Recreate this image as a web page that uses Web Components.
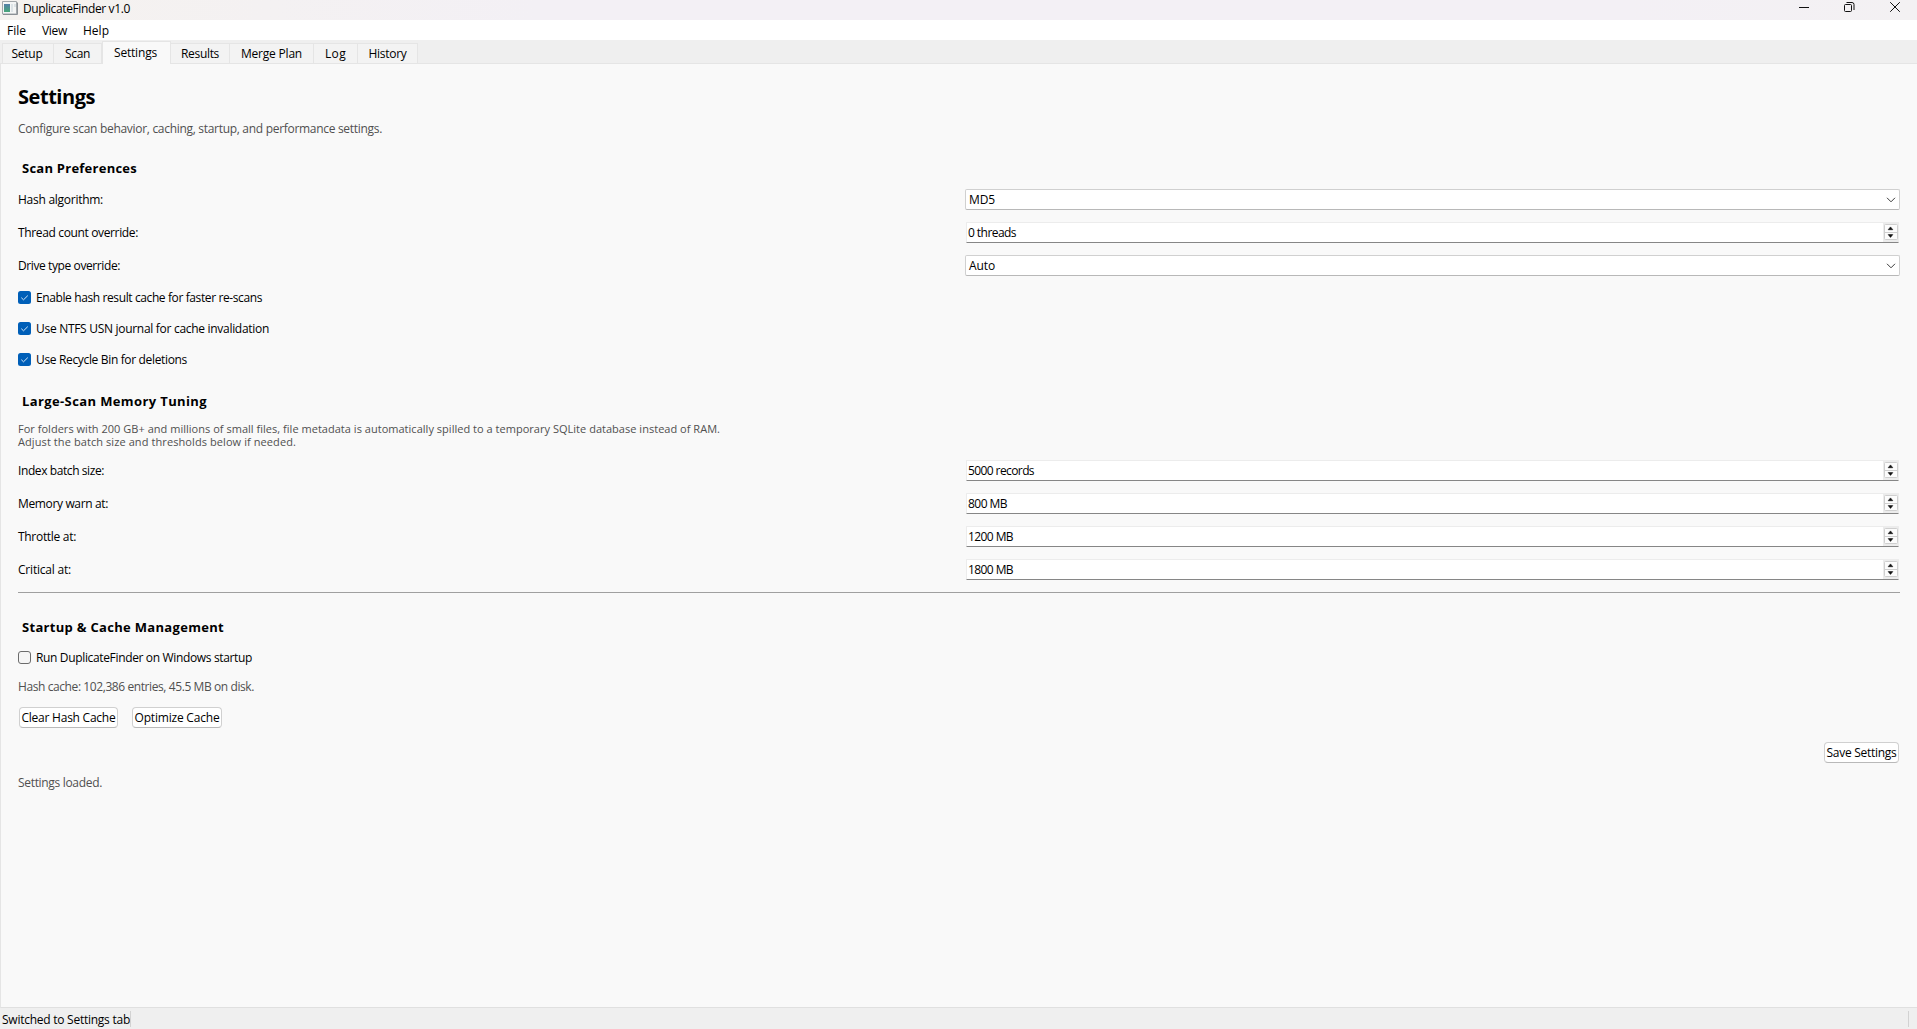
<!DOCTYPE html>
<html lang="en">
<head>
<meta charset="utf-8">
<title>DuplicateFinder v1.0</title>
<style>
html,body{margin:0;height:100%;overflow:hidden}
body{font:12px/18px "Open Sans","Noto Sans",sans-serif;color:#000;background:#f9f9f9}
</style>
</head>
<body>
<app-window></app-window>
<script>
const define = (name, html, setup) => {
  const t = document.createElement('template');
  t.innerHTML = html;
  customElements.define(name, class extends HTMLElement {
    constructor() {
      super();
      this.attachShadow({mode: 'open'}).append(t.content.cloneNode(true));
    }
    connectedCallback() { if (setup) setup.call(this); }
  });
};

define('app-window', `<style>
:host{display:flex;flex-direction:column;height:100vh;width:100%}
settings-page{flex:1}
</style>
<title-bar></title-bar><menu-bar></menu-bar><tab-strip></tab-strip><settings-page></settings-page><status-bar></status-bar>`);

define('title-bar', `<style>
:host{display:flex;height:20px;background:linear-gradient(90deg,#f5f2ef,#f3f0f5 28%,#f3f0f5 85%,#f3f1f3);flex:none;box-sizing:border-box;padding-left:2px}
fit-text{margin:0 0 0 5px}
.icon{margin-top:1px}
.sp{flex:1}
.ctl{margin-right:17px;width:120px;height:20px}
</style>
<svg class="icon" width="16" height="14" viewBox="0 0 16 14"><defs><linearGradient id="g" x2="0" y2="1"><stop stop-color="#5580a8"/><stop offset="1" stop-color="#48a778"/></linearGradient></defs><path d="M.5 .5h14v12.500h-14z" fill="#f4f5f5" stroke="#a3a7aa"/><path d="M1 13.500h14.500v-12" fill="none" stroke="#8b9095"/><path d="M2 3h6v8H2z" fill="url(#g)"/><path d="M9 3h2v8H9zM12 3h2v3h-2z" fill="#dde3e6"/></svg>
<fit-text w="107">DuplicateFinder v1.0</fit-text><span class="sp"></span>
<svg class="ctl" viewBox="0 0 120 20" fill="none" stroke="#111"><path d="M19 7.500h10"/><rect x="64.500" y="4.500" width="7" height="7" rx="1"/><path d="M66.500 2.500h5.500a2 2 0 0 1 2 2v5.500" /><path d="M110.200 2.200l9.600 9.600M119.800 2.200l-9.600 9.600"/></svg>`);

define('menu-bar', `<style>
:host{display:flex;height:20px;background:#fff;flex:none;gap:16px;padding:2px 0 0 7px;box-sizing:border-box}
</style><fit-text w="19">File</fit-text><fit-text w="25">View</fit-text><fit-text w="26">Help</fit-text>`);

define('tab-strip', `<style>
:host{display:flex;height:24px;background:#efefef;flex:none;padding-left:2px;box-sizing:border-box;align-items:flex-end;box-shadow:inset 0 -1px #e5e5e5}
</style>
<tab-item style="width:52px;padding-right:2px"><fit-text w="31">Setup</fit-text></tab-item><tab-item style="width:48px"><fit-text w="25">Scan</fit-text></tab-item><tab-item active style="width:69px;padding-right:2px"><fit-text w="43">Settings</fit-text></tab-item><tab-item style="width:59px"><fit-text w="38">Results</fit-text></tab-item><tab-item style="width:84px"><fit-text w="61">Merge Plan</fit-text></tab-item><tab-item style="width:44px"><fit-text w="21">Log</fit-text></tab-item><tab-item style="width:60px"><fit-text w="38">History</fit-text></tab-item>`);

define('tab-item', `<style>
:host{display:flex;box-sizing:border-box;height:21px;border:1px solid #e5e5e5;border-left-width:0;background:#f3f3f3;justify-content:center;padding-top:1px}
:host(:first-of-type){border-left-width:1px}
:host([active]){height:23px;border-bottom:0;border-left-width:1px;background:#f9f9f9;padding-top:2px}
</style><slot></slot>`);

define('section-title', `<style>
:host{display:block;font-weight:700;font-size:13px;height:18px;line-height:18px;padding-left:4px}
</style><slot></slot>`);

define('form-row', `<style>
:host{display:grid;grid-template-columns:947px 1fr;height:21px;margin-bottom:12px}
.l{padding-top:2px}
</style><div class="l"><slot name="label"></slot></div><slot></slot>`);

define('combo-box', `<style>
:host{display:flex;box-sizing:border-box;height:21px;border:1px solid #d0d0d0;border-bottom-color:#b8b8b8;border-radius:2px;background:#fff;padding:1px 3px 0 3px;justify-content:space-between}
svg{margin-top:6px}
</style><slot></slot><svg width="10" height="6" viewBox="0 0 10 6"><path d="M1 .8l4 4 4-4" fill="none" stroke="#3c3c3c"/></svg>`);

define('spin-box', `<style>
:host{display:flex;box-sizing:border-box;height:21px;margin:0 1px 0 0;border:1px solid #ececec;border-bottom:1px solid #868686;border-radius:1px;background:#fff;padding-left:1px;margin-left:1px;justify-content:space-between}
slot{display:block;padding-top:1px}
.b{background:#ececec;padding:1px 0 0 1px;width:14px}
svg{display:block}
</style><slot></slot><div class="b"><svg width="14" height="16" viewBox="0 0 14 16"><rect x=".5" y=".5" width="13" height="15" rx="1" fill="#fcfcfc" stroke="#cfcfcf"/><path d="M1 8.500h12" stroke="#cfcfcf"/><path d="M6.500 2.900l2.300 2.800H4.200zM6.500 13.400l2.300-2.800H4.200z" fill="#111" stroke="#111" stroke-width=".6"/></svg></div>`);

define('check-box', `<style>
:host{display:flex;height:16px;gap:5px}
svg{margin-top:2px;flex:none}
.on{display:none}
:host([checked]) .on{display:block}
:host([checked]) .off{display:none}
</style>
<svg class="on" width="13" height="13" viewBox="0 0 13 13"><rect width="13" height="13" rx="2.500" fill="#005fb8"/><path d="M3.300 6.700l2.200 2.100 4.300-4.200" fill="none" stroke="#d8e9f8"/></svg>
<svg class="off" width="13" height="13" viewBox="0 0 13 13"><rect x=".5" y=".5" width="12" height="12" rx="2.500" fill="#f6f6f6" stroke="#6c6c6c"/></svg>
<slot></slot>`);

define('push-button', `<style>
:host{display:flex;box-sizing:border-box;height:21px;border:1px solid #d0d0d0;border-bottom-color:#b9b9b9;border-radius:4px;background:#fff;padding-top:1px;justify-content:center}
</style><slot></slot>`);

define('settings-page', `<style>
:host{display:flex;flex-direction:column;box-sizing:border-box;border-left:1px solid #e5e5e5;border-bottom:1px solid #e0e0e0;background:#f9f9f9;padding:18px 17px 0}
h1{margin:0;font-size:20px;line-height:30px;height:28px}
.muted{color:#505050;height:16px}
.small{font-size:11px;line-height:13px;color:#505050}
.small div{height:13px}
hr{border:0;height:1px;background:#a0a0a0;margin:0;width:100%}
.btns{display:flex;gap:14px;padding-left:1px}
.save{align-self:flex-end;width:75px;margin-right:1px}
</style>
<h1><fit-text w="77">Settings</fit-text></h1>
<div class="muted" style="margin-top:10px"><fit-text w="364">Configure scan behavior, caching, startup, and performance settings.</fit-text></div>
<section-title style="margin-top:23px"><fit-text w="115">Scan Preferences</fit-text></section-title>
<div style="margin-top:12px">
<form-row><fit-text slot="label" w="85">Hash algorithm:</fit-text><combo-box><fit-text w="26">MD5</fit-text></combo-box></form-row>
<form-row><fit-text slot="label" w="120">Thread count override:</fit-text><spin-box><fit-text w="48">0 threads</fit-text></spin-box></form-row>
<form-row><fit-text slot="label" w="102">Drive type override:</fit-text><combo-box><fit-text w="26">Auto</fit-text></combo-box></form-row>
</div>
<check-box checked style="margin-top:1px"><fit-text w="226">Enable hash result cache for faster re-scans</fit-text></check-box>
<check-box checked style="margin-top:15px"><fit-text w="233">Use NTFS USN journal for cache invalidation</fit-text></check-box>
<check-box checked style="margin-top:15px"><fit-text w="151">Use Recycle Bin for deletions</fit-text></check-box>
<section-title style="margin-top:25px"><fit-text w="185">Large-Scan Memory Tuning</fit-text></section-title>
<div class="small" style="margin-top:12px"><div><fit-text w="702">For folders with 200 GB+ and millions of small files, file metadata is automatically spilled to a temporary SQLite database instead of RAM.</fit-text></div><div><fit-text w="278">Adjust the batch size and thresholds below if needed.</fit-text></div></div>
<div style="margin-top:12px">
<form-row><fit-text slot="label" w="86">Index batch size:</fit-text><spin-box><fit-text w="66">5000 records</fit-text></spin-box></form-row>
<form-row><fit-text slot="label" w="90">Memory warn at:</fit-text><spin-box><fit-text w="39">800 MB</fit-text></spin-box></form-row>
<form-row><fit-text slot="label" w="58">Throttle at:</fit-text><spin-box><fit-text w="45">1200 MB</fit-text></spin-box></form-row>
<form-row><fit-text slot="label" w="53">Critical at:</fit-text><spin-box><fit-text w="45">1800 MB</fit-text></spin-box></form-row>
</div>
<hr>
<section-title style="margin-top:25px"><fit-text w="202">Startup &amp; Cache Management</fit-text></section-title>
<check-box style="margin-top:13px"><fit-text w="216">Run DuplicateFinder on Windows startup</fit-text></check-box>
<div class="muted" style="margin-top:13px"><fit-text w="236">Hash cache: 102,386 entries, 45.5 MB on disk.</fit-text></div>
<div class="btns" style="margin-top:13px"><push-button style="width:99px"><fit-text w="94">Clear Hash Cache</fit-text></push-button><push-button style="width:90px"><fit-text w="85">Optimize Cache</fit-text></push-button></div>
<push-button class="save" style="margin-top:14px"><fit-text w="70">Save Settings</fit-text></push-button>
<div class="muted" style="margin-top:11px"><fit-text w="84">Settings loaded.</fit-text></div>`);

define('status-bar', `<style>
:host{display:flex;flex:none;height:21px;background:#efefef;padding:3px 8px 0 2px;box-sizing:border-box;justify-content:space-between}
div{display:flex}
i{display:block;width:1px;height:16px;background:#d2d2d2}
</style><div><fit-text w="128">Switched to Settings tab</fit-text><i></i></div><i></i>`);

/* Spreads a line of text over the advance width given in "w". */
define('fit-text', `<style>
:host{display:inline-block;white-space:nowrap;flex:none;vertical-align:top}
</style><slot></slot>`, function () {
  const w = +this.getAttribute('w');
  const natural = this.getBoundingClientRect().width;
  this.style.letterSpacing = (w - natural) / this.textContent.length + 'px';
  this.style.width = w + 'px';
});
</script>
</body>
</html>
